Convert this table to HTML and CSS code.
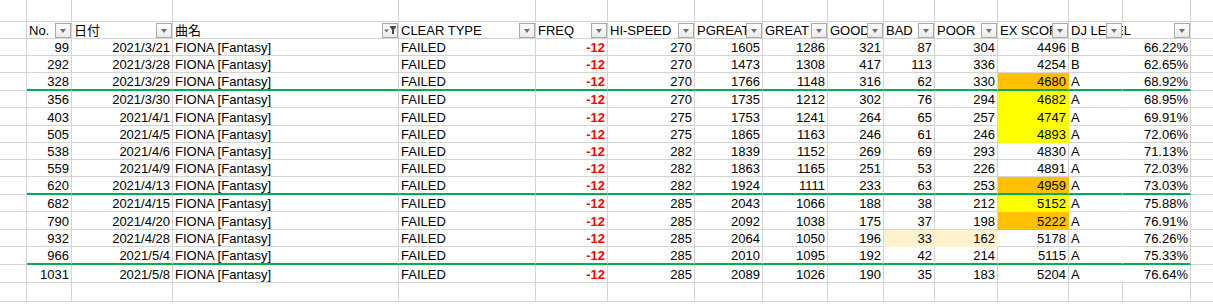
FILE: index.html
```html
<!DOCTYPE html>
<html lang="ja">
<head>
  <meta charset="UTF-8">
  <title>FIONA [Fantasy]</title>
  <link rel="stylesheet" href="styles.css">
</head>
<body>
  <div class="sheet">
    <div class="row top">
      <div></div><div></div><div></div><div></div><div></div><div></div><div></div><div></div><div></div><div></div><div></div><div></div><div></div><div></div><div></div><div></div>
    </div>

    <div class="row head">
      <div></div>
      <div>No.<span class="btn"></span></div>
      <div>日付<span class="btn"></span></div>
      <div>曲名<span class="btn on"><svg width="14" height="13" viewBox="0 0 14 13"><path d="M1 5.5h5l-2.5 3z" fill="#6b6b6b"/><path d="M7 2h6v1.2l-2 2.3V10H9V5.5L7 3.2z" fill="#4a4a4a"/></svg></span></div>
      <div>CLEAR TYPE<span class="btn"></span></div>
      <div>FREQ<span class="btn"></span></div>
      <div>HI-SPEED<span class="btn"></span></div>
      <div>PGREAT<span class="btn"></span></div>
      <div>GREAT<span class="btn"></span></div>
      <div>GOOD<span class="btn"></span></div>
      <div>BAD<span class="btn"></span></div>
      <div>POOR<span class="btn"></span></div>
      <div>EX SCORE<span class="btn"></span></div>
      <div class="lvl spill">DJ LEVEL<span class="btn"></span></div>
      <div><span class="btn"></span></div>
      <div></div>
    </div>

    <div class="row">
      <div></div><div class="r">99</div><div class="r">2021/3/21</div><div>FIONA [Fantasy]</div><div>FAILED</div><div class="r neg">-12</div>
      <div class="r">270</div><div class="r">1605</div><div class="r">1286</div><div class="r">321</div><div class="r">87</div><div class="r">304</div>
      <div class="r">4496</div><div class="lvl">B</div><div class="r">66.22%</div><div></div>
    </div>
    <div class="row">
      <div></div><div class="r">292</div><div class="r">2021/3/28</div><div>FIONA [Fantasy]</div><div>FAILED</div><div class="r neg">-12</div>
      <div class="r">270</div><div class="r">1473</div><div class="r">1308</div><div class="r">417</div><div class="r">113</div><div class="r">336</div>
      <div class="r">4254</div><div class="lvl">B</div><div class="r">62.65%</div><div></div>
    </div>
    <div class="row sep">
      <div></div><div class="r">328</div><div class="r">2021/3/29</div><div>FIONA [Fantasy]</div><div>FAILED</div><div class="r neg">-12</div>
      <div class="r">270</div><div class="r">1766</div><div class="r">1148</div><div class="r">316</div><div class="r">62</div><div class="r">330</div>
      <div class="r orange">4680</div><div class="lvl">A</div><div class="r">68.92%</div><div></div>
    </div>
    <div class="row">
      <div></div><div class="r">356</div><div class="r">2021/3/30</div><div>FIONA [Fantasy]</div><div>FAILED</div><div class="r neg">-12</div>
      <div class="r">270</div><div class="r">1735</div><div class="r">1212</div><div class="r">302</div><div class="r">76</div><div class="r">294</div>
      <div class="r yellow">4682</div><div class="lvl">A</div><div class="r">68.95%</div><div></div>
    </div>
    <div class="row tall">
      <div></div><div class="r">403</div><div class="r">2021/4/1</div><div>FIONA [Fantasy]</div><div>FAILED</div><div class="r neg">-12</div>
      <div class="r">275</div><div class="r">1753</div><div class="r">1241</div><div class="r">264</div><div class="r">65</div><div class="r">257</div>
      <div class="r yellow">4747</div><div class="lvl">A</div><div class="r">69.91%</div><div></div>
    </div>
    <div class="row">
      <div></div><div class="r">505</div><div class="r">2021/4/5</div><div>FIONA [Fantasy]</div><div>FAILED</div><div class="r neg">-12</div>
      <div class="r">275</div><div class="r">1865</div><div class="r">1163</div><div class="r">246</div><div class="r">61</div><div class="r">246</div>
      <div class="r yellow">4893</div><div class="lvl">A</div><div class="r">72.06%</div><div></div>
    </div>
    <div class="row">
      <div></div><div class="r">538</div><div class="r">2021/4/6</div><div>FIONA [Fantasy]</div><div>FAILED</div><div class="r neg">-12</div>
      <div class="r">282</div><div class="r">1839</div><div class="r">1152</div><div class="r">269</div><div class="r">69</div><div class="r">293</div>
      <div class="r">4830</div><div class="lvl">A</div><div class="r">71.13%</div><div></div>
    </div>
    <div class="row">
      <div></div><div class="r">559</div><div class="r">2021/4/9</div><div>FIONA [Fantasy]</div><div>FAILED</div><div class="r neg">-12</div>
      <div class="r">282</div><div class="r">1863</div><div class="r">1165</div><div class="r">251</div><div class="r">53</div><div class="r">226</div>
      <div class="r">4891</div><div class="lvl">A</div><div class="r">72.03%</div><div></div>
    </div>
    <div class="row sep">
      <div></div><div class="r">620</div><div class="r">2021/4/13</div><div>FIONA [Fantasy]</div><div>FAILED</div><div class="r neg">-12</div>
      <div class="r">282</div><div class="r">1924</div><div class="r">1111</div><div class="r">233</div><div class="r">63</div><div class="r">253</div>
      <div class="r orange">4959</div><div class="lvl">A</div><div class="r">73.03%</div><div></div>
    </div>
    <div class="row">
      <div></div><div class="r">682</div><div class="r">2021/4/15</div><div>FIONA [Fantasy]</div><div>FAILED</div><div class="r neg">-12</div>
      <div class="r">285</div><div class="r">2043</div><div class="r">1066</div><div class="r">188</div><div class="r">38</div><div class="r">212</div>
      <div class="r yellow">5152</div><div class="lvl">A</div><div class="r">75.88%</div><div></div>
    </div>
    <div class="row tall">
      <div></div><div class="r">790</div><div class="r">2021/4/20</div><div>FIONA [Fantasy]</div><div>FAILED</div><div class="r neg">-12</div>
      <div class="r">285</div><div class="r">2092</div><div class="r">1038</div><div class="r">175</div><div class="r">37</div><div class="r">198</div>
      <div class="r orange">5222</div><div class="lvl">A</div><div class="r">76.91%</div><div></div>
    </div>
    <div class="row">
      <div></div><div class="r">932</div><div class="r">2021/4/28</div><div>FIONA [Fantasy]</div><div>FAILED</div><div class="r neg">-12</div>
      <div class="r">285</div><div class="r">2064</div><div class="r">1050</div><div class="r">196</div><div class="r cream">33</div><div class="r cream">162</div>
      <div class="r">5178</div><div class="lvl">A</div><div class="r">76.26%</div><div></div>
    </div>
    <div class="row sep">
      <div></div><div class="r">966</div><div class="r">2021/5/4</div><div>FIONA [Fantasy]</div><div>FAILED</div><div class="r neg">-12</div>
      <div class="r">285</div><div class="r">2010</div><div class="r">1095</div><div class="r">192</div><div class="r">42</div><div class="r">214</div>
      <div class="r">5115</div><div class="lvl">A</div><div class="r">75.33%</div><div></div>
    </div>
    <div class="row tall">
      <div></div><div class="r">1031</div><div class="r">2021/5/8</div><div>FIONA [Fantasy]</div><div>FAILED</div><div class="r neg">-12</div>
      <div class="r">285</div><div class="r">2089</div><div class="r">1026</div><div class="r">190</div><div class="r">35</div><div class="r">183</div>
      <div class="r">5204</div><div class="lvl">A</div><div class="r">76.64%</div><div></div>
    </div>

    <div class="row bottom">
      <div></div><div></div><div></div><div></div><div></div><div></div><div></div><div></div><div></div><div></div><div></div><div></div><div></div><div></div><div></div><div></div>
    </div>
  </div>
</body>
</html>
```

FILE: styles.css
```css
* {
  box-sizing: border-box;
}

body {
  margin: 0;
  background-color: #fff;
  color: #000;
  font-family: "Liberation Sans", Arial, "Noto Sans CJK JP", sans-serif;
  font-size: 13px;
  overflow: hidden;
}

.sheet {
  width: 1231px;
}

.row {
  display: grid;
  grid-template-columns: 27px 45px 101px 226px 137px 72px 87px 68px 65px 56px 51px 63px 71px 54px 68px 40px;
  height: 17px;
}

.row > div {
  display: flex;
  align-items: flex-end;
  padding: 0 2px;
  line-height: 15px;
  white-space: nowrap;
  overflow: hidden;
  border-right: 1px solid #d4d4d4;
  border-bottom: 1px solid #d4d4d4;
}

.row.top {
  height: 22px;
}

.row.tall {
  height: 18px;
}

.row.bottom {
  height: 19px;
}

.row.sep {
  height: 18px;
}

.row.sep > div:not(:first-child):not(:last-child) {
  border-bottom: 2px solid #00b050;
}

.row > .r {
  justify-content: flex-end;
}

.row > .neg {
  color: #ff0000;
  font-weight: bold;
}

.row > .lvl {
  border-right-color: transparent;
}

.row > .yellow {
  background-color: #ffff00;
  border-color: #ffff00;
}

.row > .orange {
  background-color: #ffc000;
  border-color: #ffc000;
}

.row > .cream {
  background-color: #fff2cc;
  border-color: #fff2cc;
}

/* header row with filter buttons */
.head > div {
  position: relative;
}

.head > .spill {
  overflow: visible;
}

.btn {
  position: absolute;
  right: 0;
  bottom: 0;
  width: 16px;
  height: 15px;
  display: flex;
  align-items: center;
  justify-content: center;
  border: 1px solid #a9a9a9;
  background: linear-gradient(#ffffff, #eaeaea);
}

.btn::after {
  content: "";
  border-left: 3.5px solid transparent;
  border-right: 3.5px solid transparent;
  border-top: 4px solid #707070;
}

.btn.on::after {
  display: none;
}
```
